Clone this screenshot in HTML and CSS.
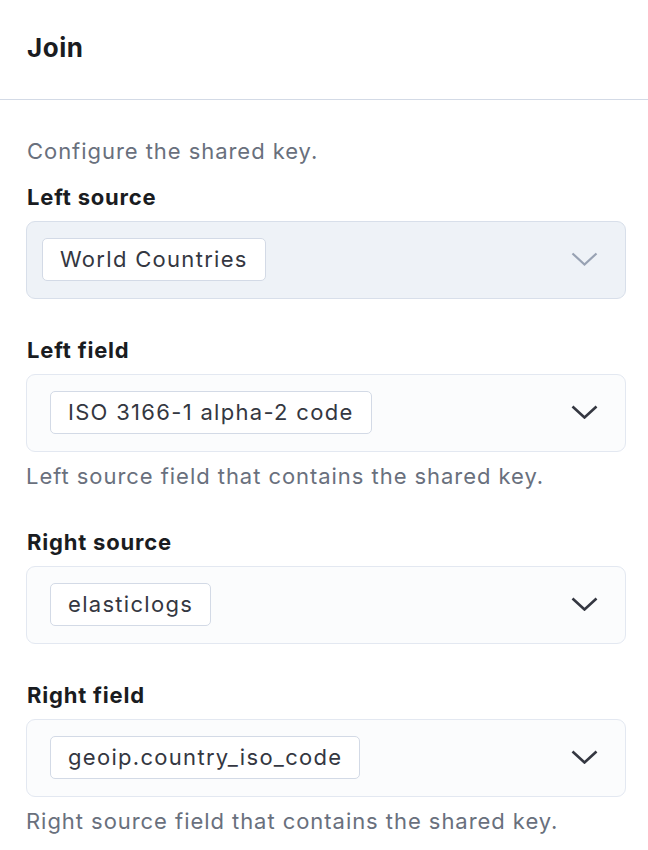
FILE: index.html
```html
<!DOCTYPE html>
<html lang="en">
<head>
    <meta charset="UTF-8">
    <meta name="viewport" content="width=device-width, initial-scale=1.0">
    <title>Join</title>
    <link rel="stylesheet" href="styles.css">
</head>
<body>
    <div id="panel">
        <header class="panel-header">
            <h2>Join</h2>
        </header>
        <main class="panel-body">
            <p class="intro">Configure the shared key.</p>

            <div class="form-row">
                <label class="row-label">Left source</label>
                <div class="select select-disabled">
                    <span class="pill">World Countries</span>
                    <svg class="chevron" width="27" height="14" viewBox="0 0 27 14"><polyline points="1.5,1.5 13.5,12.5 25.5,1.5" fill="none" stroke="currentColor" stroke-width="2.2"/></svg>
                </div>
            </div>

            <div class="form-row">
                <label class="row-label">Left field</label>
                <div class="select">
                    <span class="pill">ISO 3166-1 alpha-2 code</span>
                    <svg class="chevron" width="27" height="14" viewBox="0 0 27 14"><polyline points="1.5,1.5 13.5,12.5 25.5,1.5" fill="none" stroke="currentColor" stroke-width="2.6"/></svg>
                </div>
                <p class="help">Left source field that contains the shared key.</p>
            </div>

            <div class="form-row">
                <label class="row-label">Right source</label>
                <div class="select">
                    <span class="pill">elasticlogs</span>
                    <svg class="chevron" width="27" height="14" viewBox="0 0 27 14"><polyline points="1.5,1.5 13.5,12.5 25.5,1.5" fill="none" stroke="currentColor" stroke-width="2.6"/></svg>
                </div>
            </div>

            <div class="form-row">
                <label class="row-label">Right field</label>
                <div class="select">
                    <span class="pill">geoip.country_iso_code</span>
                    <svg class="chevron" width="27" height="14" viewBox="0 0 27 14"><polyline points="1.5,1.5 13.5,12.5 25.5,1.5" fill="none" stroke="currentColor" stroke-width="2.6"/></svg>
                </div>
                <p class="help">Right source field that contains the shared key.</p>
            </div>
        </main>
    </div>
</body>
</html>
```

FILE: styles.css
```css
body {
    font-family: 'Inter', 'Noto Sans', sans-serif;
    margin: 0;
    padding: 0;
    background-color: #fff;
    color: #1a1c21;
}

.panel-header {
    height: 100px;
    box-sizing: border-box;
    padding: 30px 27px 0;
    border-bottom: 1px solid #d3dae6;
}

.panel-header h2 {
    margin: 0;
    font-size: 26px;
    line-height: 36px;
    font-weight: 700;
    letter-spacing: 0.5px;
}

.panel-body {
    padding: 36px 22px 0 26px;
}

.intro, .help {
    margin: 0;
    font-size: 22px;
    line-height: 30px;
    letter-spacing: 0.95px;
    color: #69707d;
}

.intro {
    padding-left: 1px;
    margin-bottom: 16px;
}

.form-row + .form-row {
    margin-top: 36px;
}

.row-label {
    display: block;
    padding-left: 1px;
    margin-bottom: 9px;
    font-size: 22px;
    line-height: 30px;
    font-weight: 700;
    letter-spacing: 0.8px;
}

.select {
    height: 78px;
    box-sizing: border-box;
    display: flex;
    align-items: center;
    justify-content: space-between;
    padding: 0 27px 2px 23px;
    background-color: #fbfcfd;
    border: 1px solid #e3e8f1;
    border-radius: 9px;
}

.select-disabled {
    padding-left: 15px;
    background-color: #eef2f7;
    border-color: #d8dfea;
}

.pill {
    height: 43px;
    box-sizing: border-box;
    display: inline-flex;
    align-items: center;
    padding: 0 17px;
    background-color: #fff;
    border: 1px solid #d3dae6;
    border-radius: 5px;
    font-size: 22px;
    letter-spacing: 1.3px;
    color: #343741;
}

.chevron {
    color: #343741;
}

.select-disabled .chevron {
    color: #98a2b3;
}

.help {
    margin-top: 9px;
}
```
